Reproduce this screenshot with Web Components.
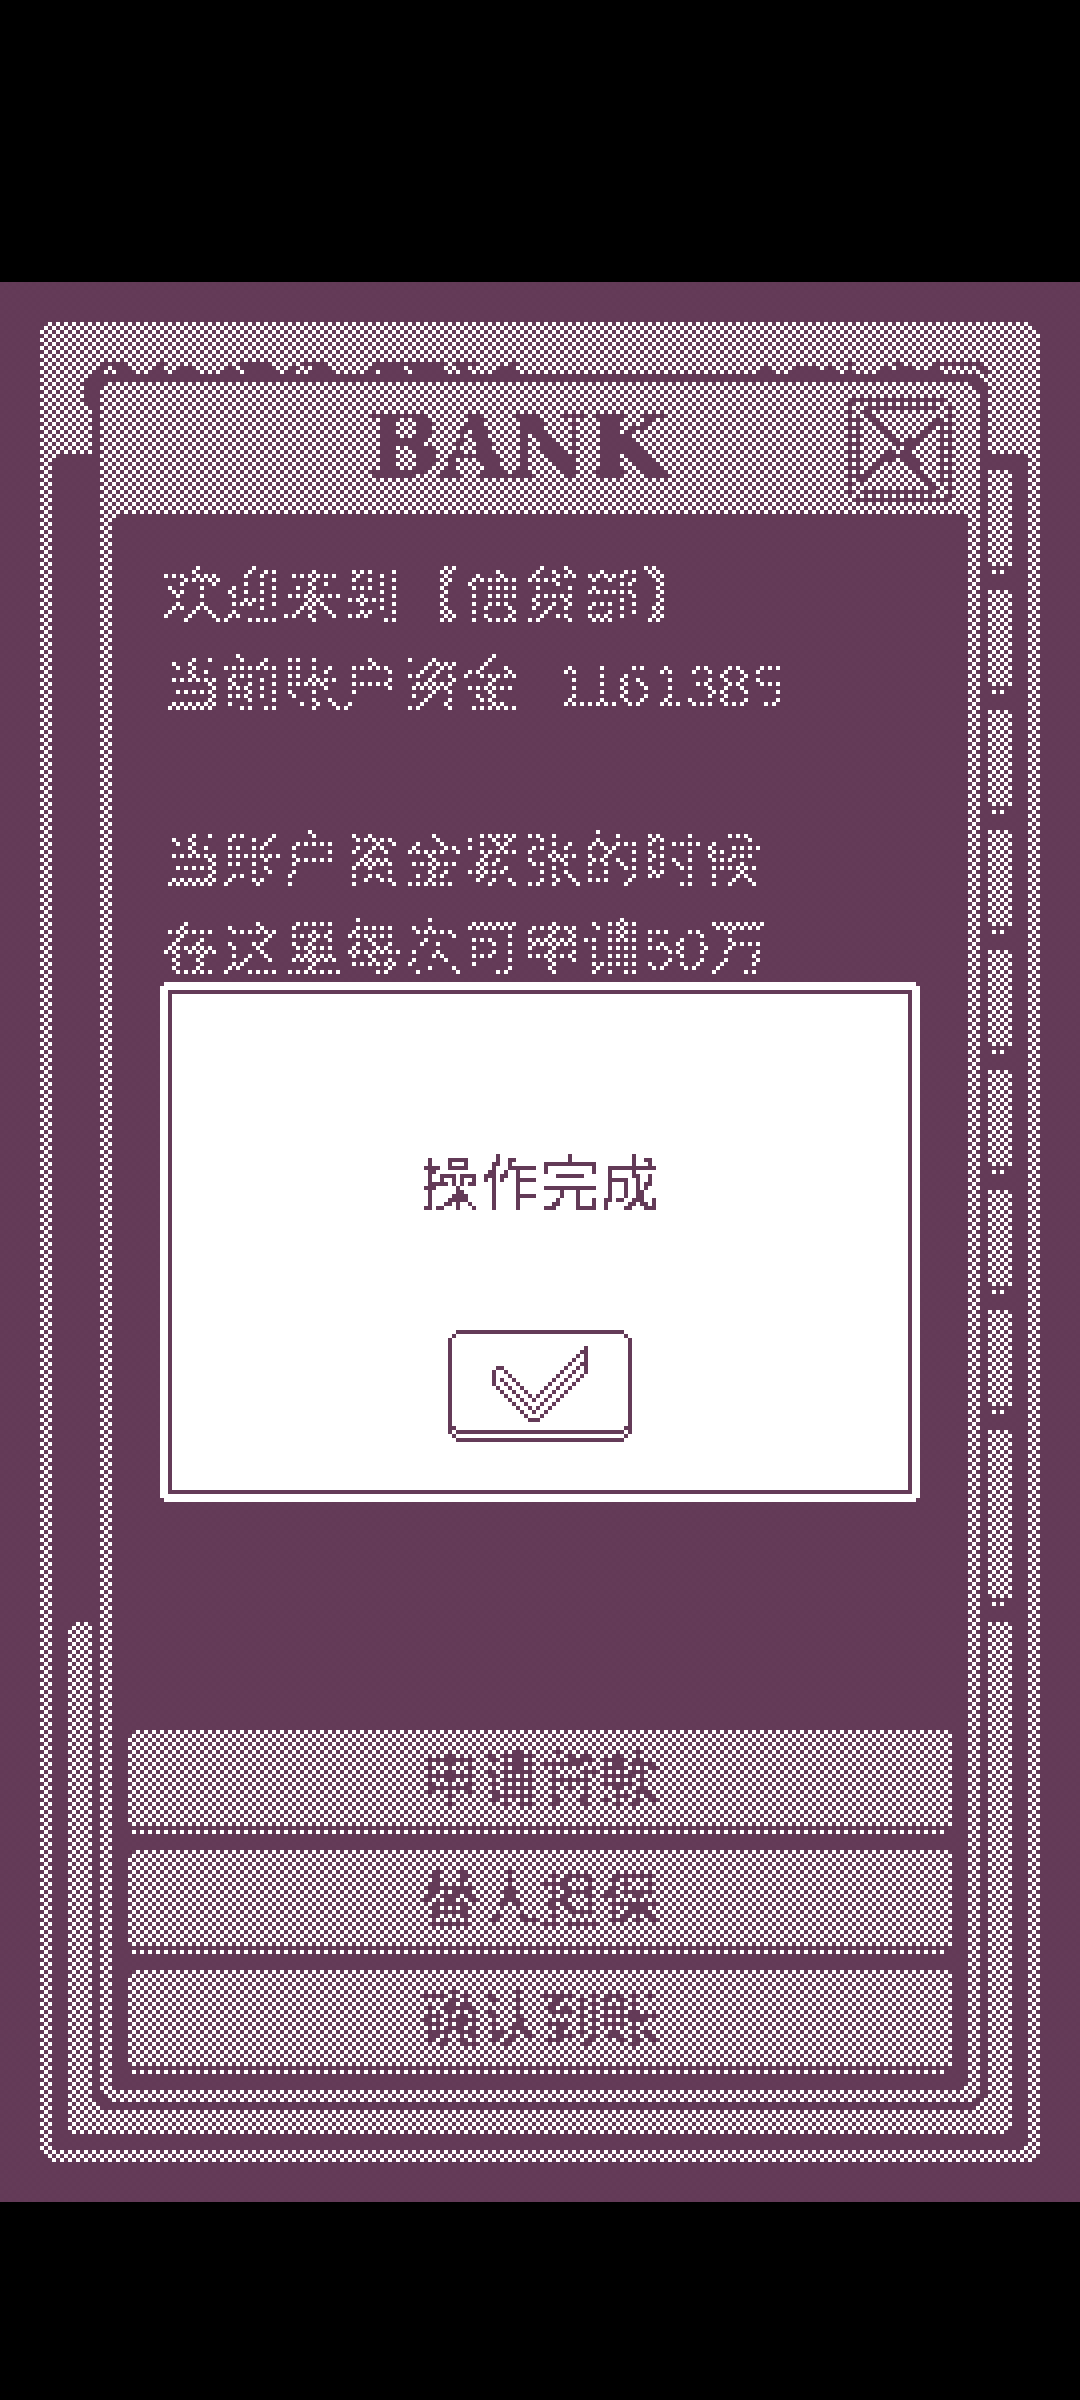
<!DOCTYPE html>
<html lang="zh-CN">
<head>
<meta charset="utf-8">
<meta name="viewport" content="width=device-width, initial-scale=1">
<title>BANK</title>
<style>
  :root { --ink: #643b58; --paper: #ffffff; --px: 4px; }
  body {
    margin: 0; box-sizing: border-box; min-height: 100vh; padding-top: 84px;
    display: flex; flex-direction: column; justify-content: center;
    background: #000; color: var(--paper);
    font-family: "Liberation Sans", "Noto Sans CJK SC", sans-serif;
    font-size: 60px; line-height: 88px;
  }
</style>
</head>
<body>
<game-stage>
  <desk-window slot="scene"></desk-window>
  <bank-window slot="scene" heading="BANK">
    <span slot="copy">欢迎来到【信贷部】
当前账户资金  1161385

当账户资金紧张的时候
在这里每次可申请50万</span>
    <bank-option slot="actions">申请贷款</bank-option>
    <bank-option slot="actions">替人担保</bank-option>
    <bank-option slot="actions">确认到账</bank-option>
  </bank-window>
  <message-box slot="modal">操作完成</message-box>
</game-stage>

<script>
// Polygon with stair-stepped corners, each n game pixels deep.
function notch(n) {
  const corner = [];
  for (let i = 0; i < n; i++) {
    corner.push([i, n - i], [i + 1, n - i]);
  }
  corner.push([n, 0]);
  const near = v => `calc(${v} * var(--px))`;
  const far = v => `calc(100% - ${v} * var(--px))`;
  const tl = corner.map(([x, y]) => `${near(x)} ${near(y)}`);
  const tr = corner.slice().reverse().map(([x, y]) => `${far(x)} ${near(y)}`);
  const br = corner.map(([x, y]) => `${far(x)} ${far(y)}`);
  const bl = corner.slice().reverse().map(([x, y]) => `${near(x)} ${far(y)}`);
  return `polygon(${[...tl, ...tr, ...br, ...bl].join(',')})`;
}

// Snaps everything to 4px cells in the two palette colours.
const ones = Array(16).fill(1).join(' ');
const pixelFilter = `
<svg width="0" height="0" style="position:absolute" aria-hidden="true">
  <filter id="pixel" filterUnits="userSpaceOnUse" x="0" y="0" width="4000" height="4000" color-interpolation-filters="sRGB">
    <feConvolveMatrix in="SourceGraphic" order="4" kernelMatrix="${ones}" divisor="16" targetX="2" targetY="2" edgeMode="duplicate" preserveAlpha="true" result="avg"/>
    <feFlood x="2" y="2" width="1" height="1" flood-color="#000" result="dot"/>
    <feOffset in="dot" x="0" y="0" width="4" height="4" dx="0" dy="0" result="cell"/>
    <feTile in="cell" result="grid"/>
    <feComposite in="avg" in2="grid" operator="in"/>
    <feConvolveMatrix order="4" kernelMatrix="${ones}" divisor="1" targetX="1" targetY="1" edgeMode="none"/>
    <feColorMatrix values="0 1.3 0 0 -0.3  0 1.3 0 0 -0.3  0 1.3 0 0 -0.3  0 0 0 1 0"/>
    <feComponentTransfer>
      <feFuncR type="discrete" tableValues="0.392 1"/>
      <feFuncG type="discrete" tableValues="0.231 1"/>
      <feFuncB type="discrete" tableValues="0.345 1"/>
    </feComponentTransfer>
  </filter>
</svg>`;

// Draws runs of cells given as [row, column, length, height] lists.
const runs = list => list.map(([r, c, n, h = 1]) => `<rect x="${c}" y="${r}" width="${n}" height="${h}"/>`).join('');

function define(name, html) {
  customElements.define(name, class extends HTMLElement {
    constructor() {
      super();
      this.attachShadow({ mode: 'open' }).innerHTML = html;
    }
    connectedCallback() {
      const h = this.shadowRoot.querySelector('h1');
      if (h) h.textContent = this.getAttribute('heading');
    }
  });
}

define('game-stage', `
<style>
  :host { display: grid; width: 100%; aspect-ratio: 9 / 16; background: var(--ink); }
  .scene, .modal { grid-area: 1 / 1; display: grid; padding: 40px; }
  .scene { background: var(--ink); filter: url(#pixel); }
  .veil {
    grid-area: 1 / 1; z-index: 1; pointer-events: none;
    background: conic-gradient(var(--ink) 25%, transparent 0 50%, var(--ink) 0 75%, transparent 0) 0 0 / 8px 8px;
  }
  .modal { z-index: 2; place-items: center; }
  .scene ::slotted(*) { grid-area: 1 / 1; }
</style>
${pixelFilter}
<div class="scene"><slot name="scene"></slot></div>
<div class="veil"></div>
<div class="modal"><slot name="modal"></slot></div>`);

const left = [
  [0,4,7],[0,18,3],[0,39,7],[0,55,6],[0,73,17],[0,93,6],[0,106,2],
  [1,3,3],[1,7,5],[1,17,3],[1,23,5],[1,36,2],[1,40,7],[1,51,2],[1,57,5],[1,72,8],[1,82,8],[1,94,2],[1,104,4],
  [2,2,3],[2,8,5],[2,16,4],[2,23,6],[2,35,3],[2,41,7],[2,50,3],[2,57,6],[2,71,2],[2,74,6],[2,83,8],[2,94,2],[2,103,6],
  [3,1,6],[4,0,5,6],[10,1,4],[11,2,4]
];
const right = [
  [0,23,1],[0,35,1],[0,45,12],
  [1,2,2],[1,9,6],[1,18,2],[1,23,1],[1,31,3],[1,35,4],[1,44,2],[1,56,2],
  [2,1,4],[2,9,3],[2,13,3],[2,17,4],[2,22,3],[2,30,14],[2,44,3],[2,56,2]
];

define('desk-window', `
<style>
  :host { display: flex; flex-direction: column; box-sizing: border-box; padding: 0 12px 12px; background: var(--paper); clip-path: ${notch(2)}; }
  header { box-sizing: border-box; height: 132px; padding: 40px 40px 0 32px; display: flex; justify-content: space-between; align-items: flex-start; }
  svg { fill: var(--ink); height: 48px; }
  .inner { flex: 1; display: flex; flex-direction: column; gap: 16px; padding: 16px; background: var(--ink); clip-path: ${notch(1)}; }
  .tab {
    box-sizing: border-box; height: 104px; width: 48px; align-self: flex-end; clip-path: ${notch(1)};
    background: linear-gradient(var(--paper) calc(100% - 8px), var(--ink) 0 calc(100% - 4px), var(--paper) 0);
  }
  .tab.tall { height: 176px; }
  .panel { flex: 1; background: var(--paper); clip-path: ${notch(1)}; }
</style>
<header>
  <svg width="440" viewBox="0 0 110 12" shape-rendering="crispEdges" aria-hidden="true">${runs(left)}</svg>
  <svg width="232" viewBox="0 0 58 12" shape-rendering="crispEdges" aria-hidden="true">${runs(right)}</svg>
</header>
<div class="inner">
  ${'<div class="tab"></div>'.repeat(8)}
  <div class="tab tall"></div>
  <div class="panel"></div>
</div>`);

define('bank-window', `
<style>
  :host { display: grid; margin: 52px; padding: 8px; background: var(--ink); clip-path: ${notch(3)}; }
  .frame { display: flex; flex-direction: column; padding: 0 12px 12px; background: var(--paper); clip-path: ${notch(2)}; }
  header { display: flex; align-items: flex-start; padding: 16px 16px 12px 72px; color: var(--ink); }
  h1 { flex: 1; margin: 0; text-align: center; font: bold 88px/96px "DejaVu Serif", serif; }
  .close { width: 104px; height: 104px; padding: 0; border: 0; background: none; color: inherit; }
  .close svg { display: block; }
  .body { flex: 1; display: flex; flex-direction: column; justify-content: space-between; background: var(--ink); clip-path: ${notch(1)}; }
  .copy { padding: 40px 50px; white-space: pre; }
  .actions { display: flex; flex-direction: column; gap: 16px; padding: 16px; }
</style>
<div class="frame">
  <header>
    <h1></h1>
    <button class="close" aria-label="关闭">
      <svg width="104" height="104" viewBox="0 0 26 26" fill="none" stroke="currentColor" shape-rendering="crispEdges" aria-hidden="true">
        <path d="M0 .5H24M.5 0V24M25.5 2V26M2 25.5H26"/>
        <path d="M4 2.5H22M2.5 5V21M23.5 5V22M3 23.5H22"/>
        <path stroke-width="1.8" d="M4 3L12.4 12M13.6 13.6L22 22.6M23 5L14.4 12.6M11.4 13.6L3 21"/>
      </svg>
    </button>
  </header>
  <div class="body">
    <div class="copy"><slot name="copy"></slot></div>
    <div class="actions"><slot name="actions"></slot></div>
  </div>
</div>`);

define('bank-option', `
<style>
  :host { display: block; }
  button {
    display: block; width: 100%; height: 104px; padding: 0; border: 0; clip-path: ${notch(1)};
    font: inherit; line-height: 88px; color: var(--ink); text-align: center;
    background: linear-gradient(var(--paper) calc(100% - 8px), var(--ink) 0 calc(100% - 4px), var(--paper) 0);
  }
</style>
<button><slot></slot></button>`);

// A one-cell diagonal that starts at row, column and runs n cells to the right.
const diagonal = (row, col, n, step) => Array.from({ length: n }, (_, i) => [row + i * step, col + i, 1]);
const check = [
  [0,2,42],[1,1,1],[1,44,1],[2,0,1,24],[2,45,1,24],[24,1,1],[24,44,1],[25,2,42],[26,1,1],[26,44,1],[27,2,42],
  [4,34,1,7],[9,12,2],[10,11,1,4],[22,20,3],
  ...diagonal(10,14,8,1), ...diagonal(16,22,12,-1),
  ...diagonal(12,13,9,1), ...diagonal(19,22,12,-1),
  ...diagonal(14,12,8,1), ...diagonal(21,23,11,-1)
];

define('message-box', `
<style>
  :host { display: block; box-sizing: border-box; width: calc(100% - 240px); padding: 8px; background: var(--paper); color: var(--ink); clip-path: ${notch(1)}; }
  .inner { border: 4px solid var(--ink); padding: 148px 0 48px; display: flex; flex-direction: column; align-items: center; gap: 100px; }
  p { margin: 0; width: 100%; text-align: center; background: var(--paper); filter: url(#pixel); }
  button { display: block; padding: 0; border: 0; background: none; color: inherit; }
  button svg { display: block; fill: currentColor; }
</style>
${pixelFilter}
<div class="inner" role="dialog">
  <p><slot></slot></p>
  <button aria-label="确定"><svg width="184" height="112" viewBox="0 0 46 28" shape-rendering="crispEdges" aria-hidden="true">${runs(check)}</svg></button>
</div>`);
</script>
</body>
</html>
